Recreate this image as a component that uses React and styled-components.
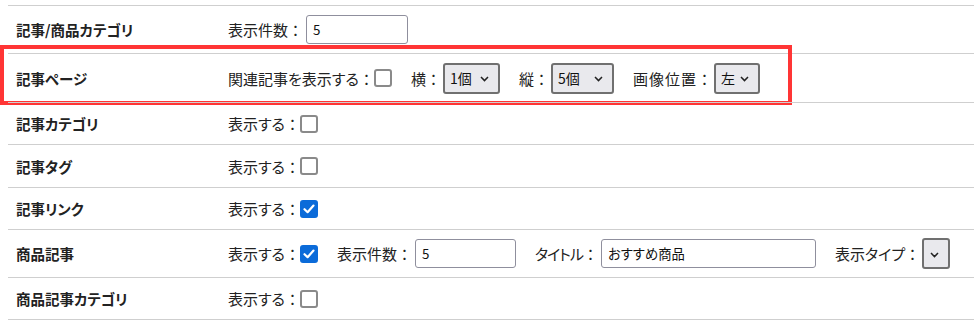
import React from "react";
import styled, { createGlobalStyle } from "styled-components";

const Global = createGlobalStyle`
  html, body { margin: 0; padding: 0; background: #fff; }
  body {
    font-family: "Noto Sans CJK JP", "Noto Sans", sans-serif;
    font-size: 15px;
    color: #222;
  }
`;

const Page = styled.div`
  padding: 5px 0 0 8px;
`;

const Table = styled.div`
  display: flex;
  flex-direction: column;
  border-bottom: 1px solid #cfcfcf;
`;

const Row = styled.div`
  position: relative;
  display: grid;
  grid-template-columns: 220px 1fr;
  align-items: center;
  height: ${(p) => p.$h}px;
  border-top: 1px solid #cfcfcf;
`;

const Highlight = styled.div`
  position: absolute;
  left: -8px;
  top: -9px;
  width: 792px;
  height: 60px;
  box-sizing: border-box;
  border: 4px solid #ff3535;
  pointer-events: none;
`;

const Head = styled.div`
  padding-left: 8px;
  font-weight: bold;
  font-size: 14.5px;
  color: #222;
  font-feature-settings: "palt";
`;

const Cell = styled.div`
  display: flex;
  align-items: center;
  gap: 19px;
`;

const Group = styled.div`
  display: flex;
  align-items: center;
`;

const LabelText = styled.span`
  white-space: nowrap;
  font-feature-settings: "palt";
  letter-spacing: ${(p) => p.$ls || 0}px;
`;

const Colon = styled.span`
  display: inline-block;
  width: 15px;
  text-align: center;
`;

const Box = styled.span`
  display: inline-flex;
  align-items: center;
  justify-content: center;
  box-sizing: border-box;
  width: 18px;
  height: 18px;
  border-radius: 3px;
  border: 2px solid ${(p) => (p.$checked ? "#0b6bd9" : "#8a8a8a")};
  background: ${(p) => (p.$checked ? "#0b6bd9" : "#fff")};
`;

const Input = styled.input`
  box-sizing: border-box;
  width: ${(p) => p.$w}px;
  height: 29px;
  margin-left: 3px;
  padding: 0 6px;
  border: 1px solid #8f8f9d;
  border-radius: 3px;
  font-family: inherit;
  font-size: 13.33px;
  font-feature-settings: "palt";
  color: #111;
  background: #fff;
  outline: none;
`;

const SelectWrap = styled.span`
  position: relative;
  display: inline-flex;
  margin-left: 2px;
`;

const Select = styled.select`
  appearance: none;
  -webkit-appearance: none;
  box-sizing: border-box;
  width: ${(p) => p.$w}px;
  height: 31px;
  padding: 0 0 0 5px;
  border: 2px solid #707070;
  border-radius: 3px;
  background: #e9e9ed;
  font-family: inherit;
  font-size: 14px;
  color: #111;
  outline: none;
`;

const Chevron = styled.svg`
  position: absolute;
  right: 11px;
  top: 50%;
  width: 9px;
  height: 6px;
  margin-top: -2px;
  pointer-events: none;
`;

function Label({ children, ls }) {
  return (
    <>
      <LabelText $ls={ls}>{children}</LabelText>
      <Colon>：</Colon>
    </>
  );
}

function Check({ checked }) {
  return (
    <Box $checked={checked}>
      {checked && (
        <svg width="12" height="10" viewBox="0 0 12 10">
          <path
            d="M1.5 5.2 L4.6 8.2 L10.5 1.6"
            fill="none"
            stroke="#fff"
            strokeWidth="2.2"
            strokeLinecap="round"
            strokeLinejoin="round"
          />
        </svg>
      )}
    </Box>
  );
}

function Sel({ w, value }) {
  return (
    <SelectWrap>
      <Select $w={w} defaultValue={value}>
        <option value={value}>{value}</option>
      </Select>
      <Chevron viewBox="0 0 9 6">
        <path d="M1 1 L4.5 4.6 L8 1" fill="none" stroke="#222" strokeWidth="1.5" />
      </Chevron>
    </SelectWrap>
  );
}

function ShowGroup({ label = "表示する", checked }) {
  return (
    <Group>
      <Label>{label}</Label>
      <Check checked={checked} />
    </Group>
  );
}

export default function App() {
  return (
    <>
      <Global />
      <Page>
        <Table>
          <Row $h={47}>
            <Head>記事/商品カテゴリ</Head>
            <Cell>
              <Group>
                <Label>表示件数</Label>
                <Input $w={102} defaultValue="5" />
              </Group>
            </Cell>
          </Row>
          <Row $h={48}>
            <Highlight />
            <Head>記事ページ</Head>
            <Cell>
              <ShowGroup label="関連記事を表示する" />
              <Group>
                <Label>横</Label>
                <Sel w={57} value="1個" />
              </Group>
              <Group>
                <Label>縦</Label>
                <Sel w={63} value="5個" />
              </Group>
              <Group>
                <Label ls={1}>画像位置</Label>
                <Sel w={46} value="左" />
              </Group>
            </Cell>
          </Row>
          <Row $h={41}>
            <Head>記事カテゴリ</Head>
            <Cell>
              <ShowGroup />
            </Cell>
          </Row>
          <Row $h={42}>
            <Head>記事タグ</Head>
            <Cell>
              <ShowGroup />
            </Cell>
          </Row>
          <Row $h={41}>
            <Head>記事リンク</Head>
            <Cell>
              <ShowGroup checked />
            </Cell>
          </Row>
          <Row $h={47}>
            <Head>商品記事</Head>
            <Cell>
              <ShowGroup checked />
              <Group>
                <Label>表示件数</Label>
                <Input $w={101} defaultValue="5" />
              </Group>
              <Group>
                <Label ls={-1}>タイトル</Label>
                <Input $w={215} defaultValue="おすすめ商品" />
              </Group>
              <Group>
                <Label>表示タイプ</Label>
                <Sel w={28} value="" />
              </Group>
            </Cell>
          </Row>
          <Row $h={41}>
            <Head>商品記事カテゴリ</Head>
            <Cell>
              <ShowGroup />
            </Cell>
          </Row>
        </Table>
      </Page>
    </>
  );
}
